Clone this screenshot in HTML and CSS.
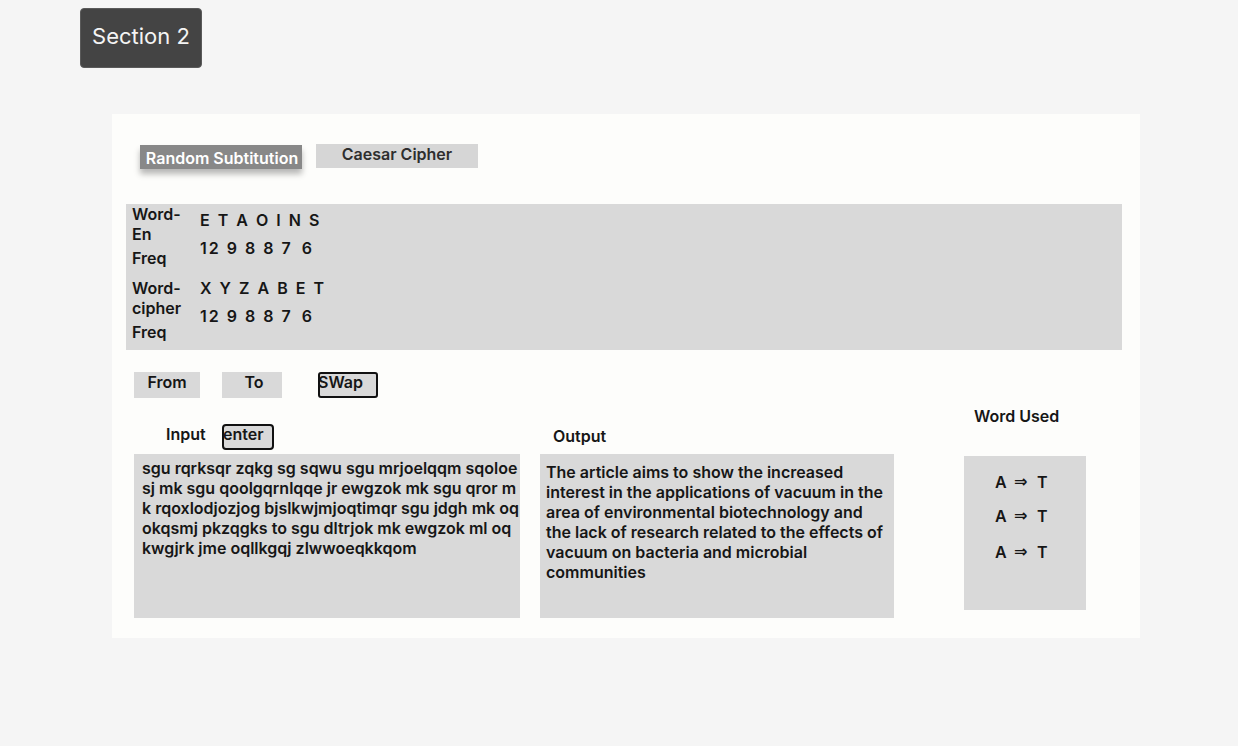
FILE: index.html
```html
<!DOCTYPE html>
<html>
<head>
<meta charset="utf-8">
<link rel="stylesheet" href="styles.css">
</head>
<body>
<div class="top">
  <button class="section-btn">Section 2</button>
</div>
<div class="panel">
  <div class="tabs">
    <div class="tab tab-active">Random Subtitution</div>
    <div class="tab tab-plain">Caesar Cipher</div>
  </div>
  <div class="freq-table">
    <div class="group">
      <div class="labels">
        <div class="lab">Word-<br>En</div>
        <div class="lab lab-freq">Freq</div>
      </div>
      <div class="values values-first">
        <div class="letters">E T A O I N S</div>
        <div class="nums">12 9 8 8 7 <span class="last">6</span></div>
      </div>
    </div>
    <div class="group group-second">
      <div class="labels">
        <div class="lab">Word-<br>cipher</div>
        <div class="lab lab-freq">Freq</div>
      </div>
      <div class="values">
        <div class="letters">X Y Z A B E T</div>
        <div class="nums">12 9 8 8 7 <span class="last">6</span></div>
      </div>
    </div>
  </div>
  <div class="controls">
    <div class="ctl ctl-from">From</div>
    <div class="ctl ctl-to">To</div>
    <div class="ctl ctl-swap">SWap</div>
  </div>
  <div class="work">
    <div class="col col-input">
      <div class="col-head">
        <div class="input-label">Input</div>
        <div class="enter-btn">enter</div>
      </div>
      <div class="box box-input">sgu rqrksqr zqkg sg sqwu sgu mrjoelqqm sqoloe<br>sj mk sgu qoolgqrnlqqe jr ewgzok mk sgu qror m<br>k rqoxlodjozjog bjslkwjmjoqtimqr sgu jdgh mk oq<br>okqsmj pkzqgks to sgu dltrjok mk ewgzok ml oq<br>kwgjrk jme oqllkgqj zlwwoeqkkqom</div>
    </div>
    <div class="col col-output">
      <div class="output-label">Output</div>
      <div class="box box-output">The article aims to show the increased<br>interest in the applications of vacuum in the<br>area of environmental biotechnology and<br>the lack of research related to the effects of<br>vacuum on bacteria and microbial<br>communities</div>
    </div>
    <div class="col col-used">
      <div class="used-label">Word Used</div>
      <div class="box box-used">
        <div class="map map-1"><span>A</span><span class="arrow">⇒</span><span>T</span></div>
        <div class="map map-2"><span>A</span><span class="arrow">⇒</span><span>T</span></div>
        <div class="map map-3"><span>A</span><span class="arrow">⇒</span><span>T</span></div>
      </div>
    </div>
  </div>
</div>
</body>
</html>
```
FILE: styles.css
```css
* { box-sizing: border-box; }
html, body { margin: 0; padding: 0; }
body {
  background: #f5f5f5;
  font-family: Inter, "Liberation Sans", sans-serif;
  color: #161616;
  width: 1238px;
  height: 746px;
  overflow: hidden;
}
.top { padding: 8px 0 0 80px; height: 114px; }
.section-btn {
  width: 122px;
  height: 60px;
  background: #444444;
  border: 1px solid #5a5a5a;
  border-radius: 4px;
  color: #f4f4f4;
  font-family: Inter, "Liberation Sans", sans-serif;
  font-size: 22px;
  font-weight: 400;
  padding: 0 0 4px 0;
  text-align: center;
}
.panel {
  margin-left: 112px;
  width: 1028px;
  height: 524px;
  background: #fdfdfb;
  padding-top: 30px;
}
.tabs { display: flex; align-items: flex-start; padding-left: 28px; gap: 14px; height: 60px; }
.tab {
  width: 162px;
  height: 24px;
  font-weight: 600;
  text-align: center;
  white-space: nowrap;
}
.tab-active {
  margin-top: 1px;
  background: #888888;
  color: #ffffff;
  font-size: 16px;
  line-height: 27px;
  box-shadow: 0 5px 6px rgba(0,0,0,0.28);
  padding-left: 2px;
}
.tab-plain {
  background: #d6d6d6;
  color: #2e2e2e;
  font-size: 16px;
  line-height: 20px;
}
.freq-table {
  margin: 0 18px 0 14px;
  background: #d9d9d9;
  height: 146px;
  padding: 0 6px 0 6px;
  font-size: 16px;
  font-weight: 600;
  line-height: 20px;
}
.group { display: flex; }
.group-second { margin-top: 10px; }
.labels { width: 68px; }
.lab-freq { margin-top: 4px; }
.values-first { padding-top: 6px; }
.letters { letter-spacing: 2px; }
.nums { margin-top: 8px; letter-spacing: 2px; }
.nums .last { margin-left: 3px; }
.controls {
  display: flex;
  margin: 22px 0 0 22px;
  height: 26px;
  font-size: 16px;
  font-weight: 600;
  line-height: 20px;
}
.ctl { height: 26px; background: #d9d9d9; }
.ctl-from { width: 66px; text-align: center; }
.ctl-to { width: 60px; margin-left: 22px; text-align: center; padding-left: 4px; }
.ctl-swap {
  width: 60px;
  margin-left: 36px;
  border: 2px solid #111;
  border-radius: 3px;
  line-height: 16px;
  text-indent: -2px;
}
.work {
  display: flex;
  align-items: flex-start;
  margin-left: 22px;
  font-size: 16px;
  font-weight: 600;
  line-height: 20px;
}
.col-input { width: 386px; margin-top: 26px; }
.col-head { display: flex; height: 26px; margin-bottom: 4px; }
.input-label { width: 88px; padding-left: 32px; }
.enter-btn {
  width: 52px;
  height: 26px;
  border: 2px solid #111;
  border-radius: 4px;
  background: #d9d9d9;
  line-height: 16px;
  text-indent: -1px;
}
.box { background: #d9d9d9; }
.box-input {
  height: 164px;
  padding: 4px 0 0 8px;
  white-space: nowrap;
}
.col-output { width: 354px; margin-left: 20px; margin-top: 28px; }
.output-label { padding-left: 13px; margin-bottom: 8px; }
.box-output {
  height: 164px;
  padding: 8px 0 0 6px;
  white-space: nowrap;
}
.col-used { width: 122px; margin-left: 70px; margin-top: 8px; }
.used-label { padding-left: 10px; }
.box-used { margin-top: 30px; height: 154px; padding: 16px 0 0 31px; }
.map { display: flex; height: 20px; }
.map span { display: inline-block; }
.map span:first-child { width: 19px; }
.map .arrow { width: 23px; font-family: "DejaVu Sans", sans-serif; font-weight: 700; font-size: 16px; }
.map-2 { margin-top: 14px; }
.map-3 { margin-top: 16px; }
```
